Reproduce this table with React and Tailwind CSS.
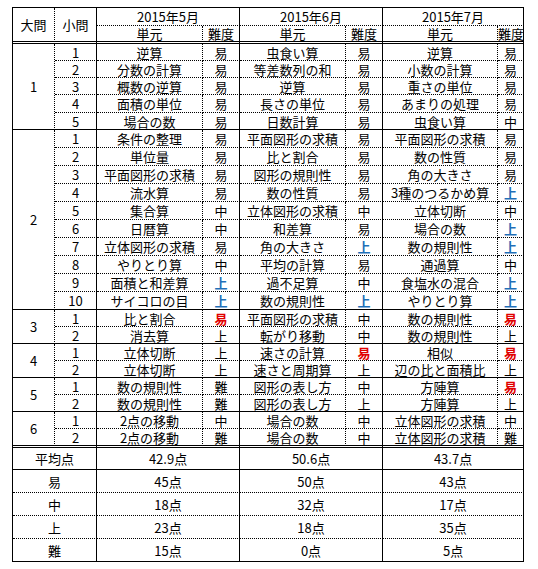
const months = ["2015年5月", "2015年6月", "2015年7月"];

// each row: [unit, diff, unit, diff, unit, diff]; diff suffix "r" = red, "b" = blue
const groups = [
  {
    no: "1",
    heights: ["h-[17px]", "h-[17px]", "h-[17px]", "h-[18px]", "h-[17px]"],
    rows: [
      ["逆算", "易", "虫食い算", "易", "逆算", "易"],
      ["分数の計算", "易", "等差数列の和", "易", "小数の計算", "易"],
      ["概数の逆算", "易", "逆算", "易", "重さの単位", "易"],
      ["面積の単位", "易", "長さの単位", "易", "あまりの処理", "易"],
      ["場合の数", "易", "日数計算", "易", "虫食い算", "中"],
    ],
  },
  {
    no: "2",
    heights: Array(10).fill("h-[18px]"),
    rows: [
      ["条件の整理", "易", "平面図形の求積", "易", "平面図形の求積", "易"],
      ["単位量", "易", "比と割合", "易", "数の性質", "易"],
      ["平面図形の求積", "易", "図形の規則性", "易", "角の大きさ", "易"],
      ["流水算", "易", "数の性質", "易", "3種のつるかめ算", "上b"],
      ["集合算", "中", "立体図形の求積", "中", "立体切断", "中"],
      ["日暦算", "中", "和差算", "易", "場合の数", "上b"],
      ["立体図形の求積", "易", "角の大きさ", "上b", "数の規則性", "上b"],
      ["やりとり算", "中", "平均の計算", "易", "通過算", "中"],
      ["面積と和差算", "上b", "過不足算", "中", "食塩水の混合", "上b"],
      ["サイコロの目", "上b", "数の規則性", "上b", "やりとり算", "上b"],
    ],
  },
  {
    no: "3",
    heights: ["h-[17px]", "h-[17px]"],
    rows: [
      ["比と割合", "易r", "平面図形の求積", "中", "数の規則性", "易r"],
      ["消去算", "上", "転がり移動", "中", "数の規則性", "上"],
    ],
  },
  {
    no: "4",
    heights: ["h-[17px]", "h-[17px]"],
    rows: [
      ["立体切断", "上", "速さの計算", "易r", "相似", "易r"],
      ["立体切断", "上", "速さと周期算", "上", "辺の比と面積比", "上"],
    ],
  },
  {
    no: "5",
    heights: ["h-[17px]", "h-[17px]"],
    rows: [
      ["数の規則性", "難", "図形の表し方", "中", "方陣算", "易r"],
      ["数の規則性", "難", "図形の表し方", "上", "方陣算", "上"],
    ],
  },
  {
    no: "6",
    heights: ["h-[17px]", "h-[19px]"],
    rows: [
      ["2点の移動", "中", "場合の数", "中", "立体図形の求積", "中"],
      ["2点の移動", "難", "場合の数", "中", "立体図形の求積", "難"],
    ],
  },
];

const summary = [
  ["平均点", "42.9点", "50.6点", "43.7点"],
  ["易", "45点", "50点", "43点"],
  ["中", "18点", "32点", "17点"],
  ["上", "23点", "18点", "35点"],
  ["難", "15点", "0点", "5点"],
];

function diffText(d) {
  if (d.endsWith("r")) return <span className="text-[#e00000] font-bold">{d[0]}</span>;
  if (d.endsWith("b")) return <span className="text-[#1f6fb8] font-bold">{d[0]}</span>;
  return d;
}

export default function App() {
  return (
    <div className="bg-white w-[538px] h-[569px] pt-[7px] pl-[12px]">
      <table
        className="table-fixed w-[512px] border-separate border-spacing-0 border-t border-l border-black text-[13px] leading-none text-black text-center whitespace-nowrap"
        style={{ fontFamily: '"Noto Sans CJK JP", "Noto Sans", sans-serif' }}
      >
        <colgroup>
          <col className="w-[42px]" />
          <col className="w-[42px]" />
          <col className="w-[106px]" />
          <col className="w-[37px]" />
          <col className="w-[106px]" />
          <col className="w-[37px]" />
          <col className="w-[115px]" />
          <col className="w-[26px]" />
        </colgroup>
        <tbody>
          <tr className="h-[18px]">
            <td rowSpan={2} className="p-0 border-r border-b-[3px] border-black [border-right-style:dotted] [border-bottom-style:double]">
              大問
            </td>
            <td rowSpan={2} className="p-0 border-r border-b-[3px] border-black [border-bottom-style:double]">
              小問
            </td>
            {months.map((m) => (
              <td key={m} colSpan={2} className="p-0 border-r border-b border-black [border-bottom-style:dotted]">
                {m}
              </td>
            ))}
          </tr>
          <tr className="h-[18px]">
            {months.map((m) => [
              <td key={m + "u"} className="p-0 border-r border-b-[3px] border-black [border-right-style:dotted] [border-bottom-style:double]">
                単元
              </td>,
              <td key={m + "d"} className="p-0 border-r border-b-[3px] border-black [border-bottom-style:double]">
                難度
              </td>,
            ])}
          </tr>

          {groups.map((g, gi) =>
            g.rows.map((r, ri) => {
              const last = ri === g.rows.length - 1;
              const veryLast = gi === groups.length - 1 && last;
              const b = veryLast
                ? "border-b-[3px] [border-bottom-style:double]"
                : last
                ? "border-b"
                : "border-b [border-bottom-style:dotted]";
              const bigB = gi === groups.length - 1
                ? "border-b-[3px] [border-bottom-style:double]"
                : "border-b";
              return (
                <tr key={g.no + "-" + ri} className={g.heights[ri]}>
                  {ri === 0 && (
                    <td rowSpan={g.rows.length} className={"p-0 border-r border-black [border-right-style:dotted] " + bigB}>
                      {g.no}
                    </td>
                  )}
                  <td className={"p-0 border-r border-black " + b}>{ri + 1}</td>
                  {[0, 2, 4].map((i) => [
                    <td key={i + "u"} className={"p-0 border-r border-black [border-right-style:dotted] " + b}>
                      {r[i]}
                    </td>,
                    <td key={i + "d"} className={"p-0 border-r border-black " + b}>
                      {diffText(r[i + 1])}
                    </td>,
                  ])}
                </tr>
              );
            })
          )}

          {summary.map((s, si) => {
            const b = si === 0 || si === summary.length - 1 ? "" : "[border-bottom-style:dotted]";
            return (
              <tr key={s[0]} className={si === 0 ? "h-[22px]" : "h-[23px]"}>
                <td colSpan={2} className={"p-0 border-r border-b border-black " + b}>
                  {s[0]}
                </td>
                {[1, 2, 3].map((i) => (
                  <td key={i} colSpan={2} className={"p-0 border-r border-b border-black " + b}>
                    {s[i]}
                  </td>
                ))}
              </tr>
            );
          })}
        </tbody>
      </table>
    </div>
  );
}
